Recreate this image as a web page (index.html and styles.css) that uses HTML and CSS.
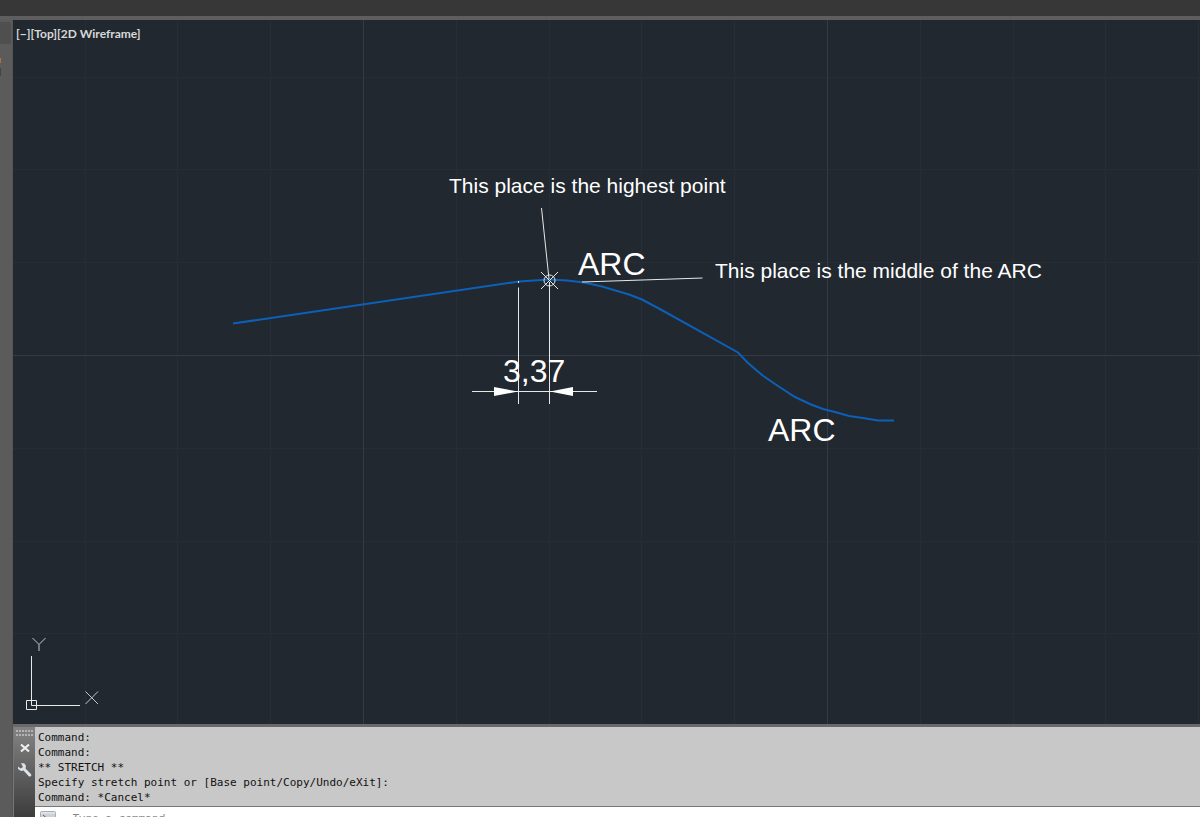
FILE: index.html
```html
<!DOCTYPE html>
<html lang="en">
<head>
    <meta charset="UTF-8">
    <meta name="viewport" content="width=device-width, initial-scale=1.0">
    <title>Drawing</title>
    <link rel="stylesheet" href="styles.css">
</head>
<body>
    <header class="title-bar"></header>

    <div class="workspace">
        <aside class="palette">
            <div class="palette-tab"></div>
            <div class="palette-mark"></div>
            <div class="palette-knob"></div>
        </aside>

        <main class="main">
            <section class="viewport">
                <svg class="drawing">
                    <defs>
                        <pattern id="grid" x="350" y="335" width="464" height="464" patternUnits="userSpaceOnUse">
                            <path class="grid-minor" d="M93.5 0V464M186.5 0V464M278.5 0V464M371.5 0V464M0 93.5H464M0 186.5H464M0 278.5H464M0 371.5H464"/>
                            <path class="grid-major" d="M.5 0V464M0 .5H464"/>
                        </pattern>
                    </defs>
                    <rect width="100%" height="100%" fill="url(#grid)"/>

                    <!-- profile -->
                    <polyline class="profile" points="220,303.5 506,261.5 521,260.5 536,259.5 554,260.5 571,262.5 589,266.5 616,274.5 629,279.5 645,288 725,332.5 735,343 749,355 765,366 782,377 798,384.5 810,389 822,392 836,396 850,398 865,400.5 881,400.5"/>

                    <!-- dimension -->
                    <path class="line" d="M505.5 261v2M505.5 267.500V384M536.500 262V384M459 371.500H584"/>
                    <path class="arrow" d="M505 371.500L481 367V376ZM537 371.500L560 367V376Z"/>

                    <!-- leaders -->
                    <path class="line" d="M528.500 188L536 259M569 262L689.500 258"/>

                    <!-- node marker -->
                    <path class="line" d="M528 252L545 269M545 252L528 269"/>
                    <circle class="line" cx="536.500" cy="260.500" r="5.500"/>

                    <text class="note" x="436" y="173">This place is the highest point</text>
                    <text class="note" x="702" y="258">This place is the middle of the ARC</text>
                    <text class="label" x="565" y="255">ARC</text>
                    <text class="label" x="755" y="421">ARC</text>
                    <text class="label" x="490" y="362">3,37</text>
                </svg>

                <div class="view-controls">[−][Top][2D Wireframe]</div>

                <svg class="ucs-icon" width="72" height="76" viewBox="0 0 72 76">
                    <path class="line" d="M5.500 20V65M9 69.500H54M.500 64.500H10.500V73.500H.500ZM5.500 65V69.500H9"/>
                    <path class="axis" d="M6.500 2L13 8.500L19.500 2M13 8.500V15M59.500 55.500L72 68M72 55.500L59.500 68"/>
                </svg>
            </section>

            <section class="command">
                <div class="command-grip">
                    <svg class="grip-dots" width="18" height="6" viewBox="0 0 18 6">
                        <path d="M0 1H18M0 5H18"/>
                    </svg>
                    <button class="grip-button" aria-label="Close">
                        <svg width="10" height="10" viewBox="0 0 10 10">
                            <path d="M1 1.500L9 8.500M9 1.500L1 8.500" stroke="#eee" stroke-width="2.200"/>
                        </svg>
                    </button>
                    <button class="grip-button" aria-label="Customize">
                        <svg width="16" height="16" viewBox="0 0 16 16">
                            <path d="M4 1L7.500 1.500L9 4L8.500 6.500L14 12Q15 14 13 14.500L12 14.500L6.500 8.500L4 9L1 7L1 4.500L3.500 6.500L6 5Z" fill="#dde2ea"/>
                        </svg>
                    </button>
                </div>

                <div class="command-body">
                    <pre class="history">Command:
Command:
** STRETCH **
Specify stretch point or [Base point/Copy/Undo/eXit]:
Command: *Cancel*</pre>
                    <div class="prompt">
                        <svg class="prompt-icon" width="16" height="14" viewBox="0 0 16 14">
                            <rect x=".5" y=".5" width="15" height="13" rx="1" fill="#ccd1d6" stroke="#aab0b6"/>
                            <path d="M1 2H15" stroke="#eef0f2"/>
                            <path d="M3 4L6 6.500L3 9M8 9.500H12" fill="none" stroke="#555c63"/>
                        </svg>
                        <input class="prompt-input" type="text" placeholder="Type a command" aria-label="Command line">
                    </div>
                </div>
            </section>
        </main>
    </div>
</body>
</html>
```

FILE: styles.css
```css
* {
    box-sizing: border-box;
}
body {
    margin: 0;
    height: 100vh;
    display: flex;
    flex-direction: column;
    overflow: hidden;
    background-color: #5c5c5c;
    font-family: "Liberation Sans", Arial, sans-serif;
}
.title-bar {
    flex: none;
    height: 16px;
    background-color: #373737;
}
.workspace {
    flex: 1;
    min-height: 0;
    display: flex;
    border-top: 4px solid #5e5e5e;
}
.palette {
    flex: none;
    width: 13px;
    background-color: #5b5b5b;
    border-right: 1px solid #555;
}
.palette-tab {
    width: 11px;
    height: 22px;
    margin-top: 2px;
    background-color: #4f4f4f;
    border-top-right-radius: 3px;
}
.palette-mark {
    width: 1px;
    height: 5px;
    margin-top: 14px;
    background-color: #b8712c;
}
.palette-knob {
    width: 1px;
    height: 8px;
    margin-top: 5px;
    background-color: #444;
}
.main {
    flex: 1;
    min-width: 0;
    display: flex;
    flex-direction: column;
}
.viewport {
    flex: 1;
    min-height: 0;
    position: relative;
    background-color: #222830;
}
.drawing {
    display: block;
    width: 100%;
    height: 100%;
}
.grid-minor {
    stroke: #272d37;
}
.grid-major {
    stroke: #353a48;
}
.profile {
    fill: none;
    stroke: #0c60b8;
    stroke-width: 2;
}
.line {
    fill: none;
    stroke: #e8e8e8;
}
.axis {
    fill: none;
    stroke: #c8c8c8;
}
.arrow {
    fill: #fff;
}
.note {
    fill: #fff;
    font-size: 21px;
}
.label {
    fill: #fff;
    font-size: 32px;
}
.view-controls {
    position: absolute;
    top: 6px;
    left: 3px;
    color: #d8d8d8;
    font: bold 12px/16px Lato, sans-serif;
}
.ucs-icon {
    position: absolute;
    left: 13px;
    bottom: 12px;
    overflow: visible;
}
.command {
    flex: none;
    height: 93px;
    display: flex;
    border-top: 3px solid #696969;
    overflow: hidden;
}
.command-grip {
    flex: none;
    width: 22px;
    display: flex;
    flex-direction: column;
    align-items: center;
    gap: 2px;
    padding-top: 3px;
    background: linear-gradient(#848484, #3c3c3c);
    border-left: 1px solid #777;
}
.grip-dots {
    flex: none;
}
.grip-dots path {
    fill: none;
    stroke: #b4b4b4;
    stroke-width: 2;
    stroke-dasharray: 2 1;
}
.grip-button {
    display: flex;
    justify-content: center;
    align-items: center;
    width: 16px;
    height: 20px;
    padding: 0;
    border: none;
    background: none;
}
.command-body {
    flex: 1;
    min-width: 0;
    background-color: #c8c8c8;
}
.history {
    margin: 0;
    padding: 3px 3px 1px;
    color: #111;
    font: 11px/15px "DejaVu Sans Mono", monospace;
}
.prompt {
    display: flex;
    gap: 16px;
    padding: 4px 5px 0;
    background-color: #fff;
    border-top: 1px solid #777;
}
.prompt-icon {
    flex: none;
}
.prompt-input {
    flex: 1;
    height: 16px;
    padding: 0;
    border: none;
    outline: none;
    background: none;
    font: italic 11px/16px "DejaVu Sans Mono", monospace;
}
.prompt-input::placeholder {
    color: #888;
}
```
